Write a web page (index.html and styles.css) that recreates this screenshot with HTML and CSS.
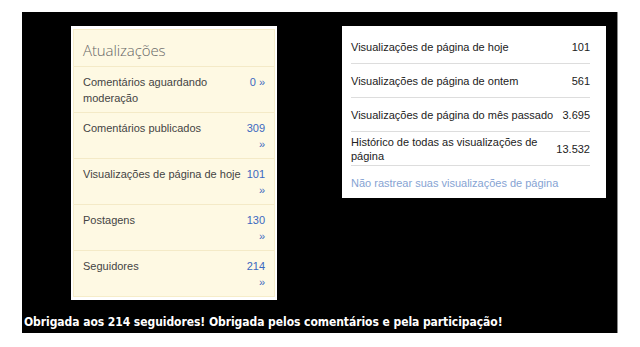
FILE: index.html
```html
<!DOCTYPE html>
<html lang="pt-BR">
<head>
    <meta charset="UTF-8">
    <meta name="viewport" content="width=device-width, initial-scale=1.0">
    <title>Estatísticas do blog</title>
    <link rel="stylesheet" href="styles.css">
</head>
<body>
    <div class="quadro">
        <div class="paineis">
            <div class="atualizacoes">
                <div class="atualizacoes-interno">
                    <h2 class="titulo">Atualizações</h2>
                    <div class="linha">
                        <span class="rotulo">Comentários aguardando moderação</span>
                        <a class="valor" href="#">0 »</a>
                    </div>
                    <div class="linha">
                        <span class="rotulo">Comentários publicados</span>
                        <a class="valor" href="#">309 »</a>
                    </div>
                    <div class="linha">
                        <span class="rotulo">Visualizações de página de hoje</span>
                        <a class="valor" href="#">101 »</a>
                    </div>
                    <div class="linha">
                        <span class="rotulo">Postagens</span>
                        <a class="valor" href="#">130 »</a>
                    </div>
                    <div class="linha ultima">
                        <span class="rotulo">Seguidores</span>
                        <a class="valor" href="#">214 »</a>
                    </div>
                </div>
            </div>

            <div class="visualizacoes">
                <div class="stat">
                    <span>Visualizações de página de hoje</span>
                    <span class="numero">101</span>
                </div>
                <div class="stat">
                    <span>Visualizações de página de ontem</span>
                    <span class="numero">561</span>
                </div>
                <div class="stat">
                    <span>Visualizações de página do mês passado</span>
                    <span class="numero">3.695</span>
                </div>
                <div class="stat">
                    <span class="longo">Histórico de todas as visualizações de página</span>
                    <span class="numero">13.532</span>
                </div>
                <a class="rastrear" href="#">Não rastrear suas visualizações de página</a>
            </div>
        </div>

        <p class="legenda">Obrigada aos 214 seguidores! Obrigada pelos comentários e pela participação!</p>
    </div>
</body>
</html>
```

FILE: styles.css
```css
body {
    margin: 0;
    background-color: #fff;
    font-family: 'Liberation Sans', Arial, sans-serif;
}

.quadro {
    margin: 12px 0 0 22px;
    width: 595px;
    height: 321px;
    background-color: #000;
    border-right: 1px solid #8a8a8a;
}

.paineis {
    display: flex;
    align-items: flex-start;
    padding-top: 14px;
}

/* painel amarelo da esquerda */
.atualizacoes {
    margin-left: 49px;
    width: 206px;
    padding: 3px 2px 3px 2px;
    box-sizing: border-box;
    background-color: #fff;
}

.atualizacoes-interno {
    background-color: #fef9e3;
    border: 1px solid #f6edc9;
}

.titulo {
    margin: 0;
    padding: 10px 9px 5px;
    font-family: 'Open Sans', sans-serif;
    font-weight: 300;
    font-size: 15px;
    letter-spacing: -0.1px;
    line-height: 21px;
    color: #666;
    border-bottom: 1px solid #f4eac7;
}

.linha {
    display: flex;
    padding: 7px 9px 6px;
    font-size: 11px;
    line-height: 16px;
    border-bottom: 1px solid #f4eac7;
    min-height: 32px;
}

.linha.ultima {
    border-bottom: none;
}

.rotulo {
    flex: 1;
    color: #444;
}

.valor {
    width: 22px;
    text-align: right;
    color: #3b68c0;
    text-decoration: none;
}

/* painel branco da direita */
.visualizacoes {
    margin-left: 65px;
    width: 264px;
    padding: 4px 16px 0 9px;
    box-sizing: border-box;
    height: 172px;
    background-color: #fff;
    font-size: 11px;
    color: #222;
}

.stat {
    display: flex;
    justify-content: space-between;
    align-items: center;
    padding-top: 1px;
    box-sizing: border-box;
    height: 34px;
    line-height: 14px;
    border-bottom: 1px solid #ddd;
}

.longo {
    width: 190px;
}

.rastrear {
    display: block;
    padding-top: 10px;
    line-height: 14px;
    color: #86a3d3;
    text-decoration: none;
}

.legenda {
    margin: 15px 0 0 2px;
    font-family: 'DejaVu Sans Condensed', 'DejaVu Sans', sans-serif;
    font-weight: bold;
    font-size: 12px;
    letter-spacing: -0.06px;
    line-height: 15px;
    color: #fff;
}
```
